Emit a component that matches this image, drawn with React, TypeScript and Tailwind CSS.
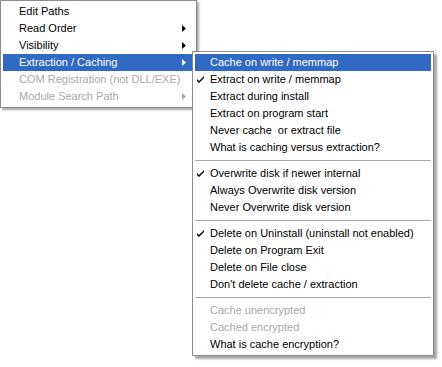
import React from "react";

type Item =
  | { sep: true }
  | { label: string; check?: boolean; disabled?: boolean; arrow?: boolean; hi?: boolean; sep?: false };

const Check = ({ color }: { color: string }) => (
  <svg width="7" height="7" viewBox="0 0 7 7" className="block">
    <path d="M0 3 L0 5 L2 7 L7 2 L7 0 L2 5 Z" fill={color} />
  </svg>
);

const Arrow = ({ color }: { color: string }) => (
  <svg width="4" height="7" viewBox="0 0 4 7" className="block">
    <path d="M0 0 L4 3.5 L0 7 Z" fill={color} />
  </svg>
);

function Menu({ items, textPad }: { items: Item[]; textPad: string }) {
  return (
    <div className="flex flex-col">
      {items.map((it, i) => {
        if ("sep" in it && it.sep) {
          return (
            <div key={i} className="h-[9px] flex items-center">
              <div className="w-full h-px bg-[#a7a7a7]" />
            </div>
          );
        }
        const item = it as Exclude<Item, { sep: true }>;
        const color = item.hi ? "#ffffff" : item.disabled ? "#a9a9a9" : "#000000";
        return (
          <div
            key={i}
            className={`relative h-[17px] flex items-center whitespace-pre ${item.hi ? "bg-[#316ac5]" : ""}`}
            style={{ color }}
          >
            {item.check && (
              <div className="absolute left-[2px] top-[5px]">
                <Check color={color} />
              </div>
            )}
            <span className={textPad}>{item.label}</span>
            {item.arrow && (
              <div className="absolute right-[8px] top-[5px]">
                <Arrow color={color} />
              </div>
            )}
          </div>
        );
      })}
    </div>
  );
}

export default function App() {
  const m1: Item[] = [
    { label: "Edit Paths" },
    { label: "Read Order", arrow: true },
    { label: "Visibility", arrow: true },
    { label: "Extraction / Caching", arrow: true, hi: true },
    { label: "COM Registration (not DLL/EXE)", disabled: true },
    { label: "Module Search Path", disabled: true, arrow: true },
  ];
  const m2: Item[] = [
    { label: "Cache on write / memmap", hi: true },
    { label: "Extract on write / memmap", check: true },
    { label: "Extract during install" },
    { label: "Extract on program start" },
    { label: "Never cache  or extract file" },
    { label: "What is caching versus extraction?" },
    { sep: true },
    { label: "Overwrite disk if newer internal", check: true },
    { label: "Always Overwrite disk version" },
    { label: "Never Overwrite disk version" },
    { sep: true },
    { label: "Delete on Uninstall (uninstall not enabled)", check: true },
    { label: "Delete on Program Exit" },
    { label: "Delete on File close" },
    { label: "Don't delete cache / extraction" },
    { sep: true },
    { label: "Cache unencrypted", disabled: true },
    { label: "Cached encrypted", disabled: true },
    { label: "What is cache encryption?" },
  ];
  return (
    <div
      className="relative w-[442px] h-[367px] bg-white overflow-hidden text-[11px]"
      style={{ fontFamily: '"Liberation Sans", Arial, sans-serif' }}
    >
      <div className="absolute left-0 top-0 w-[197px] h-[108px] bg-white border border-[#8c8c8c] p-[2px] shadow-[2px_2px_2px_rgba(0,0,0,0.35)]">
        <Menu items={m1} textPad="pl-[16px]" />
      </div>
      <div className="absolute left-[192px] top-[51px] w-[242px] h-[305px] bg-white border border-[#8c8c8c] p-[2px] shadow-[3px_3px_2px_rgba(0,0,0,0.35)]">
        <Menu items={m2} textPad="pl-[15px]" />
      </div>
    </div>
  );
}
